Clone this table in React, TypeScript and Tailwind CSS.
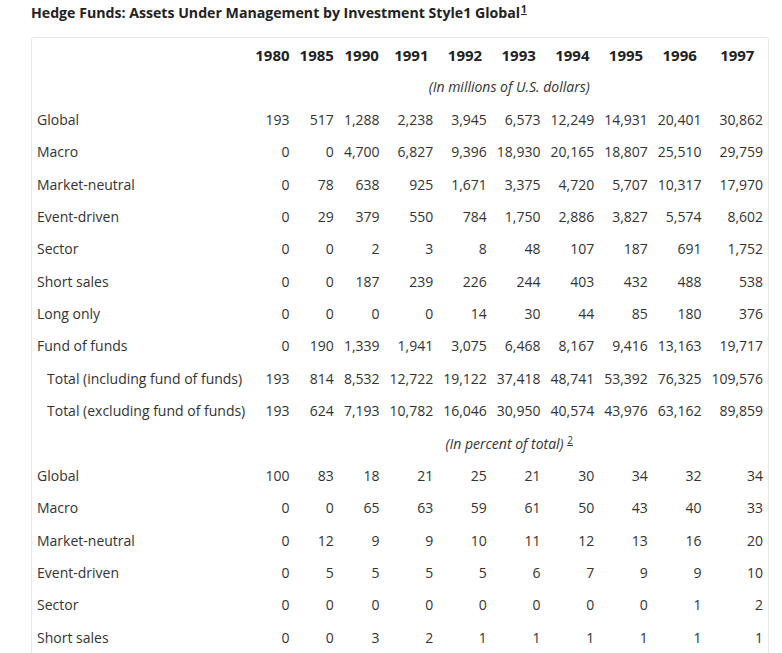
import React from "react";

const years = ["1980", "1985", "1990", "1991", "1992", "1993", "1994", "1995", "1996", "1997"];

type Row = { label: string; indent?: boolean; values: string[] };

const millions: Row[] = [
  { label: "Global", values: ["193", "517", "1,288", "2,238", "3,945", "6,573", "12,249", "14,931", "20,401", "30,862"] },
  { label: "Macro", values: ["0", "0", "4,700", "6,827", "9,396", "18,930", "20,165", "18,807", "25,510", "29,759"] },
  { label: "Market-neutral", values: ["0", "78", "638", "925", "1,671", "3,375", "4,720", "5,707", "10,317", "17,970"] },
  { label: "Event-driven", values: ["0", "29", "379", "550", "784", "1,750", "2,886", "3,827", "5,574", "8,602"] },
  { label: "Sector", values: ["0", "0", "2", "3", "8", "48", "107", "187", "691", "1,752"] },
  { label: "Short sales", values: ["0", "0", "187", "239", "226", "244", "403", "432", "488", "538"] },
  { label: "Long only", values: ["0", "0", "0", "0", "14", "30", "44", "85", "180", "376"] },
  { label: "Fund of funds", values: ["0", "190", "1,339", "1,941", "3,075", "6,468", "8,167", "9,416", "13,163", "19,717"] },
  { label: "Total (including fund of funds)", indent: true, values: ["193", "814", "8,532", "12,722", "19,122", "37,418", "48,741", "53,392", "76,325", "109,576"] },
  { label: "Total (excluding fund of funds)", indent: true, values: ["193", "624", "7,193", "10,782", "16,046", "30,950", "40,574", "43,976", "63,162", "89,859"] },
];

const percent: Row[] = [
  { label: "Global", values: ["100", "83", "18", "21", "25", "21", "30", "34", "32", "34"] },
  { label: "Macro", values: ["0", "0", "65", "63", "59", "61", "50", "43", "40", "33"] },
  { label: "Market-neutral", values: ["0", "12", "9", "9", "10", "11", "12", "13", "16", "20"] },
  { label: "Event-driven", values: ["0", "5", "5", "5", "5", "6", "7", "9", "9", "10"] },
  { label: "Sector", values: ["0", "0", "0", "0", "0", "0", "0", "0", "1", "2"] },
  { label: "Short sales", values: ["0", "0", "3", "2", "1", "1", "1", "1", "1", "1"] },
  { label: "Long only", values: ["0", "0", "0", "0", "0", "0", "0", "0", "0", "0"] },
];

function DataRow({ row }: { row: Row }) {
  return (
    <tr>
      <td className={`py-[6px] pr-[5px] whitespace-nowrap text-left ${row.indent ? "pl-[15px]" : "pl-[5px]"}`}>{row.label}</td>
      {row.values.map((v, i) => (
        <td key={i} className="py-[6px] px-[5px] text-right whitespace-nowrap">
          {v}
        </td>
      ))}
    </tr>
  );
}

export default function App() {
  return (
    <div className="min-h-screen bg-white px-[31px] pt-[3px] text-[#333]" style={{ fontFamily: '"Open Sans", "Noto Sans", sans-serif' }}>
      <div className="text-[14.15px] leading-[20px] font-bold text-[#222] whitespace-nowrap">
        Hedge Funds: Assets Under Management by Investment Style1 Global
        <sup className="underline text-[10px] ml-[1px]">1</sup>
      </div>
      <div className="mt-[14px] inline-block border border-[#e8e8e8] rounded-[3px] bg-white">
        <table className="border-collapse text-[14px] leading-[20.375px]">
          <thead>
            <tr>
              <th className="pt-[7px] pb-[6px] px-[5px]"></th>
              {years.map((y) => (
                <th key={y} className="pt-[7px] pb-[6px] px-[5px] font-bold text-center text-[15px] text-[#222]">
                  {y}
                </th>
              ))}
            </tr>
          </thead>
          <tbody>
            <tr>
              <td className="py-[6px] px-[5px]"></td>
              <td colSpan={10} className="py-[6px] px-[5px] text-center italic">
                (In millions of U.S. dollars)
              </td>
            </tr>
            {millions.map((r, i) => (
              <DataRow key={"m" + i} row={r} />
            ))}
            <tr>
              <td className="py-[6px] px-[5px]"></td>
              <td colSpan={10} className="py-[6px] px-[5px] text-center italic">
                (In percent of total) <sup className="underline not-italic text-[10px]">2</sup>
              </td>
            </tr>
            {percent.map((r, i) => (
              <DataRow key={"p" + i} row={r} />
            ))}
          </tbody>
        </table>
      </div>
    </div>
  );
}
